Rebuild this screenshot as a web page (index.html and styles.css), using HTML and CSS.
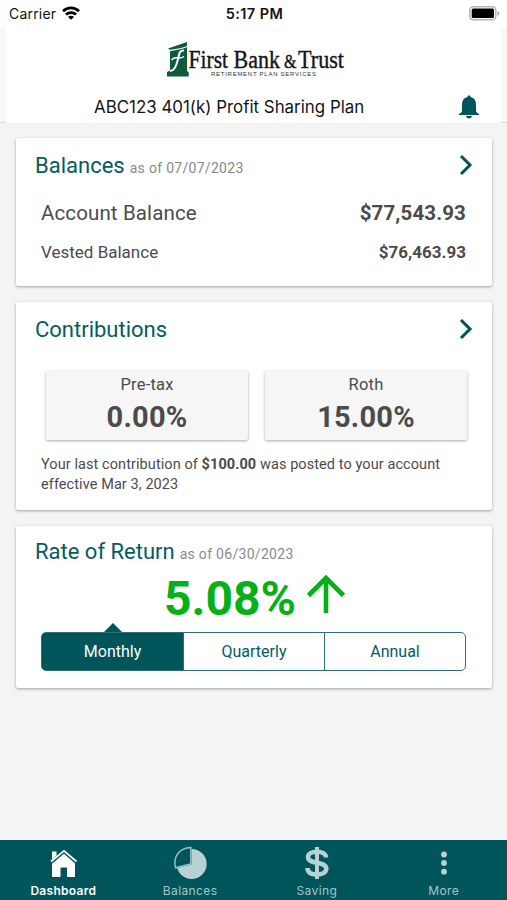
FILE: index.html
```html
<!DOCTYPE html>
<html lang="en">
<head>
    <meta charset="UTF-8">
    <meta name="viewport" content="width=device-width, initial-scale=1.0">
    <title>Dashboard</title>
    <link rel="stylesheet" href="styles.css">
</head>
<body>
    <div class="status-bar">
        <div class="carrier">
            <span>Carrier</span>
            <svg width="18" height="14" viewBox="0 0 18 14" fill="none" stroke="#000" stroke-width="2.7">
                <path d="M1 5.200C5.500.8 12.500.8 17 5.200"/>
                <path d="M3.900 8.600C6.800 5.900 11.200 5.900 14.100 8.600"/>
                <path d="M9 13.800L6 10.900C7.700 9.400 10.300 9.400 12 10.900Z" fill="#000" stroke="none"/>
            </svg>
        </div>
        <div class="time">5:17 PM</div>
        <svg class="battery" width="31" height="15" viewBox="0 0 31 15">
            <rect x=".8" y=".8" width="26" height="13" rx="3.500" fill="#fff" stroke="#b5b5b5" stroke-width="1.500"/>
            <rect x="2.700" y="2.600" width="22.300" height="9.400" rx="1.500"/>
            <path d="M28.500 5v5c2-.7 2-4.300 0-5z" fill="#999"/>
        </svg>
    </div>

    <div class="header-wrap">
        <header class="header">
            <svg class="logo" width="180" height="38" viewBox="0 0 180 38">
                <path d="M2 8.500L21 2v29l1.700 1v4.500H1V32l3-1.500V10z" fill="#0d5b3c"/>
                <path d="M1 11C8 9 14 10 21 6.500" fill="none" stroke="#fff" stroke-width="1.300"/>
                <path d="M18 10.500C13 10 13 15 11.500 21S7.500 31 4 31" fill="none" stroke="#fff" stroke-width="2"/>
                <path d="M5.500 20C9 15.500 13 20 18 16.500" fill="none" stroke="#fff" stroke-width="1.500"/>
                <g class="logo-name">
                    <text x="22.500" y="27.700" textLength="39.500" lengthAdjust="spacingAndGlyphs">First</text>
                    <text x="67.500" y="27.700" textLength="46.500" lengthAdjust="spacingAndGlyphs">Bank</text>
                    <text class="amp" x="118" y="27.700" textLength="12.500" lengthAdjust="spacingAndGlyphs">&amp;</text>
                    <text x="132" y="27.700" textLength="46" lengthAdjust="spacingAndGlyphs">Trust</text>
                </g>
                <text class="logo-sub" x="45" y="35.500" textLength="105" lengthAdjust="spacing">RETIREMENT PLAN SERVICES</text>
            </svg>
            <div class="plan-row">
                <span class="plan">ABC123 401(k) Profit Sharing Plan</span>
                <svg class="bell" width="20" height="24" viewBox="0 0 20 24" fill="#00555a">
                    <path d="M10 .5c1 0 1.600.6 1.600 1.500 3.600.8 5.400 3.600 5.400 7.500v6c0 1.500 1 2.600 3 3.600v.9H0v-.9c2-1 3-2.100 3-3.600v-6C3 5.600 4.800 2.800 8.400 2 8.400 1.100 9 .5 10 .5z"/>
                    <path d="M7 21h6c-.3 3.300-5.700 3.300-6 0z"/>
                </svg>
            </div>
        </header>
    </div>

    <main class="cards">
        <section class="card balances">
            <div class="card-head">
                <h2>Balances</h2><span class="as-of">as of 07/07/2023</span>
                <svg class="chevron" width="14" height="22" viewBox="0 0 14 22"><path d="M2 2l9 9-9 9"/></svg>
            </div>
            <div class="row account"><span>Account Balance</span><b>$77,543.93</b></div>
            <div class="row vested"><span>Vested Balance</span><b>$76,463.93</b></div>
        </section>

        <section class="card contributions">
            <div class="card-head">
                <h2>Contributions</h2>
                <svg class="chevron" width="14" height="22" viewBox="0 0 14 22"><path d="M2 2l9 9-9 9"/></svg>
            </div>
            <div class="tiles">
                <div class="tile"><span>Pre-tax</span><b>0.00%</b></div>
                <div class="tile"><span>Roth</span><b>15.00%</b></div>
            </div>
            <p class="note">Your last contribution of <b>$100.00</b> was posted to your account<br>effective Mar 3, 2023</p>
        </section>

        <section class="card return">
            <div class="card-head">
                <h2>Rate of Return</h2><span class="as-of">as of 06/30/2023</span>
            </div>
            <div class="rate">
                <b>5.08%</b>
                <svg width="38" height="39" viewBox="0 0 38 39" fill="none" stroke="#06b117" stroke-width="4.600">
                    <path d="M19 38V4M1.500 20.500L19 3l17.500 17.500"/>
                </svg>
            </div>
            <div class="tabs">
                <div class="tab active">Monthly</div>
                <div class="tab">Quarterly</div>
                <div class="tab">Annual</div>
            </div>
        </section>
    </main>

    <nav class="nav">
        <div class="nav-item current">
            <svg width="34" height="34" viewBox="0 0 34 34">
                <path d="M6 17L18 7.500 29 17v14h-8v-9.500h-6.500V31H6z" fill="#fff"/>
                <path d="M6 5.500h4.500V10L6 13.500z" fill="#fff"/>
                <path d="M5 16.500L18 5.500l12.500 11" fill="none" stroke="#00555a" stroke-width="3"/>
                <path d="M5 15.500L18 4.800l12.500 10.700" fill="none" stroke="#fff" stroke-width="1.800"/>
            </svg>
            <span>Dashboard</span>
        </div>
        <div class="nav-item">
            <svg width="34" height="34" viewBox="0 0 34 34">
                <path d="M18.500 3a15 15 0 1 1-14.300 19l14.300-3.500z" fill="#b8d2d4"/>
                <path d="M17.800 1.500V18L2.500 21.800C-.2 10.500 6.500 1.800 17.800 1.500z" fill="#00555a" stroke="#9cc2c5" stroke-width="1.400"/>
            </svg>
            <span>Balances</span>
        </div>
        <div class="nav-item">
            <svg width="34" height="34" viewBox="0 0 34 34" fill="none" stroke="#b5d3d6">
                <path d="M26 11.500C26 7.500 22 5.700 17 5.700c-5.500 0-9 2-9 5.400 0 8 18.300 3.400 18.300 11.700 0 3.600-4 5.700-9.300 5.700-6 0-9.500-2.200-9.500-6.500" stroke-width="4.500"/>
                <path d="M17 1v32" stroke-width="4"/>
            </svg>
            <span>Saving</span>
        </div>
        <div class="nav-item">
            <svg width="34" height="34" viewBox="0 0 34 34" fill="#b5d3d6">
                <circle cx="17" cy="8.500" r="2.900"/>
                <circle cx="17" cy="17" r="2.900"/>
                <circle cx="17" cy="25.700" r="2.900"/>
            </svg>
            <span>More</span>
        </div>
    </nav>
</body>
</html>
```
FILE: styles.css
```css
* {
    box-sizing: border-box;
}
body {
    margin: 0;
    height: 900px;
    display: flex;
    flex-direction: column;
    background: #f4f4f4;
    font-family: Roboto, sans-serif;
    color: #4b4b4b;
    overflow: hidden;
}
svg {
    display: block;
    flex: none;
    overflow: visible;
}
.status-bar {
    height: 27px;
    display: grid;
    grid-template-columns: 1fr auto 1fr;
    align-items: center;
    padding: 0 7px 0 9px;
    background: #fff;
    color: #111;
    font-family: Inter, sans-serif;
    font-size: 14px;
}
.carrier {
    display: flex;
    gap: 6px;
    align-items: center;
    letter-spacing: 0.2px;
}
.carrier svg {
    margin-top: -2px;
}
.time {
    font-weight: 600;
    font-size: 14.5px;
    letter-spacing: 0.4px;
}
.battery {
    justify-self: end;
    margin-top: -1px;
}
.header-wrap {
    height: 96px;
    padding: 0 6px;
    background: #f8f8f8;
    border-bottom: 1px solid #dcdcdc;
}
.header {
    height: 96px;
    padding-top: 13px;
    background: #fff;
}
.logo {
    margin-left: 160px;
}
.logo-name {
    font-family: "Liberation Serif", serif;
    font-size: 25px;
    fill: #151515;
    stroke: #151515;
    stroke-width: 0.4px;
}
.amp {
    font-size: 18px;
}
.logo-sub {
    font-family: "Liberation Sans", sans-serif;
    font-size: 6px;
    fill: #333;
}
.plan-row {
    display: flex;
    justify-content: space-between;
    align-items: center;
    margin-top: 16px;
    padding: 0 22px 0 88px;
    height: 25px;
}
.plan {
    padding-top: 1px;
    font-family: Inter, sans-serif;
    font-size: 16.9px;
    color: #151515;
}
.cards {
    flex: 1;
    display: flex;
    flex-direction: column;
    gap: 16px;
    padding: 15px 15px 0 16px;
}
.card {
    background: #fff;
    border-radius: 2px;
    box-shadow: 0 1px 3px rgba(0, 0, 0, 0.35);
    padding: 0 19px;
}
.balances {
    height: 148px;
}
.contributions {
    height: 208px;
}
.return {
    height: 162px;
}
.card-head {
    display: flex;
    align-items: baseline;
    height: 54px;
    line-height: 55px;
}
.return .card-head {
    line-height: 52px;
}
.card-head h2 {
    margin: 0;
    font-size: 22px;
    font-weight: 400;
    color: #055c60;
}
.as-of {
    margin-left: 5px;
    font-size: 14px;
    letter-spacing: 0.3px;
    color: #898989;
}
.chevron {
    align-self: center;
    margin-left: auto;
    fill: none;
    stroke: #00555a;
    stroke-width: 3;
}
.row {
    display: flex;
    justify-content: space-between;
    align-items: center;
    padding: 0 7px 0 6px;
}
.row b {
    font-weight: 700;
}
.account {
    height: 41px;
    font-size: 20.5px;
    letter-spacing: 0.12px;
}
.vested {
    height: 37px;
    font-size: 17px;
}
.tiles {
    display: grid;
    grid-template-columns: 1fr 1fr;
    gap: 17px;
    margin: 15px 6px 0 11px;
}
.tile {
    height: 69px;
    display: flex;
    flex-direction: column;
    align-items: center;
    background: #f6f6f6;
    border-radius: 2px;
    box-shadow: 0 1px 3px rgba(0, 0, 0, 0.35);
}
.tile span {
    line-height: 28px;
    font-size: 16.5px;
    letter-spacing: 0.2px;
}
.tile b {
    line-height: 36px;
    font-size: 29px;
    letter-spacing: 0.2px;
}
.note {
    margin: 15px 0 0 6px;
    font-size: 14.5px;
    line-height: 19.5px;
    letter-spacing: 0.08px;
}
.rate {
    display: flex;
    justify-content: center;
    align-items: center;
    gap: 11px;
    height: 38px;
    padding-left: 1px;
    color: #06b117;
}
.rate b {
    font-size: 48px;
    line-height: 38px;
}
.rate svg {
    margin-top: -10px;
}
.tabs {
    display: grid;
    grid-template-columns: repeat(3, 1fr);
    height: 39px;
    margin: 14px 7px 0 6px;
    border: 1px solid #2c7075;
    border-radius: 5px;
}
.tab {
    display: flex;
    align-items: center;
    justify-content: center;
    font-size: 16px;
    color: #055c60;
}
.tab + .tab {
    border-left: 1px solid #2c7075;
}
.tab.active {
    position: relative;
    background: #00555a;
    color: #fff;
    border-radius: 3px 0 0 3px;
}
/* pointer above the selected tab */
.tab.active::before {
    content: "";
    position: absolute;
    left: 50%;
    top: -10px;
    margin-left: -9px;
    border: 9px solid transparent;
    border-top: none;
    border-bottom-color: #00555a;
}
.nav {
    display: grid;
    grid-template-columns: repeat(4, 1fr);
    height: 60px;
    background: #00555a;
    font-family: Inter, sans-serif;
    font-size: 12px;
    color: #a3c7ca;
}
.nav-item {
    display: flex;
    flex-direction: column;
    align-items: center;
    padding-top: 6px;
    letter-spacing: 0.4px;
}
.nav-item span {
    line-height: 22px;
}
.current {
    color: #fff;
    font-weight: 600;
    letter-spacing: 0.3px;
}
```
